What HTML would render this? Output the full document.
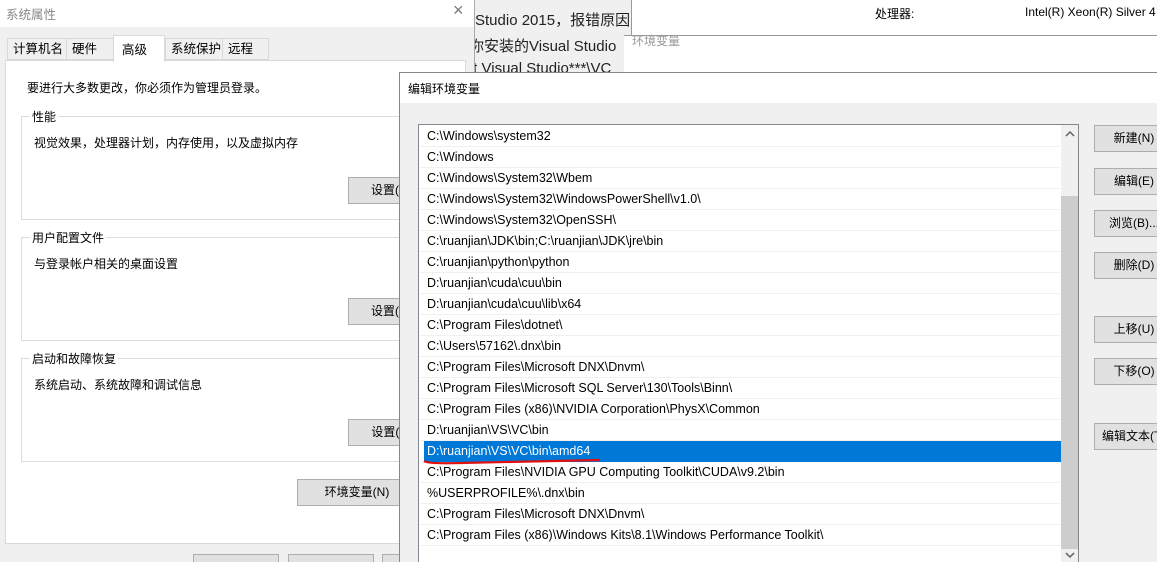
<!DOCTYPE html>
<html style="width:1157px;height:562px;overflow:hidden"><head><meta charset="utf-8"><style>
*{margin:0;padding:0;box-sizing:border-box}
body{width:1157px;height:562px;overflow:hidden;position:relative;background:#f0f0f0;font-family:"Liberation Sans","Microsoft YaHei","Noto Sans CJK SC",sans-serif;font-size:12px;color:#000}
.a{position:absolute;white-space:nowrap}
.btn{position:absolute;background:#e1e1e1;border:1px solid #adadad;text-align:center;font-size:12px;line-height:25px;height:27px}
.grp{position:absolute;border:1px solid #dcdcdc}
.gl{position:absolute;top:-9px;left:8px;background:#fff;padding:0 2px;font-size:12px}
.tab{position:absolute;top:38px;height:22px;border:1px solid #d9d9d9;background:#f0f0f0;line-height:20px;padding-left:5px;font-size:12.5px}
.row{position:absolute;left:1px;width:640px;height:21px;border-bottom:1px solid #f0f0f0;padding-left:7px;line-height:20px;font-size:12.5px}
</style></head><body>
<div class="a" style="left:0;top:0;width:475px;height:27px;background:#fff"></div>
<div class="a" style="left:6px;top:4px;color:#888;font-size:12.5px">系统属性</div>
<div class="a" style="left:453px;top:0;color:#777;font-size:18px">×</div>
<div class="a" style="left:474px;top:0;width:1px;height:562px;background:#aaa"></div>
<div class="tab" style="left:7px;width:60px">计算机名</div>
<div class="tab" style="left:66px;width:48px">硬件</div>
<div class="tab" style="left:165px;width:58px">系统保护</div>
<div class="tab" style="left:222px;width:47px">远程</div>
<div class="a" style="left:5px;top:60px;width:461px;height:484px;background:#fff;border:1px solid #d9d9d9"></div>
<div class="a" style="left:113px;top:35px;width:52px;height:27px;background:#fff;border:1px solid #d9d9d9;border-bottom:none;padding:3px 0 0 8px;font-size:12.5px">高级</div>
<div class="a" style="left:27px;top:79px">要进行大多数更改，你必须作为管理员登录。</div>
<div class="grp" style="left:21px;top:116px;width:420px;height:104px"><span class="gl">性能</span></div>
<div class="a" style="left:34px;top:134px">视觉效果，处理器计划，内存使用，以及虚拟内存</div>
<div class="btn" style="left:348px;top:177px;width:86px">设置(S)</div>
<div class="grp" style="left:21px;top:237px;width:420px;height:104px"><span class="gl">用户配置文件</span></div>
<div class="a" style="left:34px;top:255px">与登录帐户相关的桌面设置</div>
<div class="btn" style="left:348px;top:298px;width:86px">设置(E)</div>
<div class="grp" style="left:21px;top:358px;width:420px;height:104px"><span class="gl">启动和故障恢复</span></div>
<div class="a" style="left:34px;top:376px">系统启动、系统故障和调试信息</div>
<div class="btn" style="left:348px;top:419px;width:86px">设置(T)</div>
<div class="btn" style="left:297px;top:479px;width:120px">环境变量(N)</div>
<div class="btn" style="left:193px;top:554px;width:86px"></div>
<div class="btn" style="left:288px;top:554px;width:86px"></div>
<div class="btn" style="left:382px;top:554px;width:86px"></div>
<div class="a" style="left:475px;top:0;width:157px;height:80px;background:#f0f0f0;overflow:hidden;font-size:15px;color:#222">
<div class="a" style="left:0;top:9px">Studio 2015，报错原因</div>
<div class="a" style="left:-6px;top:35px">你安装的Visual Studio</div>
<div class="a" style="left:-6px;top:60px">ft Visual Studio***\VC</div>
</div>
<div class="a" style="left:631px;top:0;width:1px;height:36px;background:#999"></div>
<div class="a" style="left:632px;top:0;width:525px;height:35px;background:#fff"></div>
<div class="a" style="left:875px;top:5px">处理器:</div>
<div class="a" style="left:1025px;top:5px">Intel(R) Xeon(R) Silver 4</div>
<div class="a" style="left:624px;top:35px;width:533px;height:1px;background:#999"></div>
<div class="a" style="left:624px;top:36px;width:533px;height:42px;background:#fff"></div>
<div class="a" style="left:632px;top:32px;color:#999">环境变量</div>
<div class="a" style="left:399px;top:72px;width:758px;height:490px;background:#f0f0f0;border:1px solid #888;border-right:none;border-bottom:none"></div>
<div class="a" style="left:400px;top:73px;width:757px;height:30px;background:#fff"></div>
<div class="a" style="left:408px;top:80px">编辑环境变量</div>
<div class="a" style="left:418px;top:124px;width:661px;height:440px;background:#fff;border:1px solid #828790;overflow:hidden">
<div class="row" style="top:1px">C:\Windows\system32</div>
<div class="row" style="top:22px">C:\Windows</div>
<div class="row" style="top:43px">C:\Windows\System32\Wbem</div>
<div class="row" style="top:64px">C:\Windows\System32\WindowsPowerShell\v1.0\</div>
<div class="row" style="top:85px">C:\Windows\System32\OpenSSH\</div>
<div class="row" style="top:106px">C:\ruanjian\JDK\bin;C:\ruanjian\JDK\jre\bin</div>
<div class="row" style="top:127px">C:\ruanjian\python\python</div>
<div class="row" style="top:148px">D:\ruanjian\cuda\cuu\bin</div>
<div class="row" style="top:169px">D:\ruanjian\cuda\cuu\lib\x64</div>
<div class="row" style="top:190px">C:\Program Files\dotnet\</div>
<div class="row" style="top:211px">C:\Users\57162\.dnx\bin</div>
<div class="row" style="top:232px">C:\Program Files\Microsoft DNX\Dnvm\</div>
<div class="row" style="top:253px">C:\Program Files\Microsoft SQL Server\130\Tools\Binn\</div>
<div class="row" style="top:274px">C:\Program Files (x86)\NVIDIA Corporation\PhysX\Common</div>
<div class="row" style="top:295px">D:\ruanjian\VS\VC\bin</div>
<div class="row" style="top:316px;left:5px;width:637px;padding-left:3px;background:#0078d7;color:#fff;border-bottom:none">D:\ruanjian\VS\VC\bin\amd64</div>
<div class="row" style="top:337px">C:\Program Files\NVIDIA GPU Computing Toolkit\CUDA\v9.2\bin</div>
<div class="row" style="top:358px">%USERPROFILE%\.dnx\bin</div>
<div class="row" style="top:379px">C:\Program Files\Microsoft DNX\Dnvm\</div>
<div class="row" style="top:400px">C:\Program Files (x86)\Windows Kits\8.1\Windows Performance Toolkit\</div>
<div class="a" style="left:642px;top:0;width:17px;height:440px;background:#f0f0f0"></div>
<div class="a" style="left:642px;top:71px;width:17px;height:353px;background:#cdcdcd"></div>
<svg class="a" style="left:646px;top:5px" width="10" height="8"><path d="M1 6 L5 2 L9 6" stroke="#606060" stroke-width="1.5" fill="none"/></svg>
<svg class="a" style="left:646px;top:426px" width="10" height="8"><path d="M1 2 L5 6 L9 2" stroke="#606060" stroke-width="1.5" fill="none"/></svg>
</div>
<svg class="a" style="left:420px;top:455px" width="190" height="12"><path d="M4 6 Q8 9 40 8 L180 5" stroke="#e01010" stroke-width="2.2" fill="none"/></svg>
<div class="btn" style="left:1094px;top:125px;width:80px">新建(N)</div>
<div class="btn" style="left:1094px;top:168px;width:80px">编辑(E)</div>
<div class="btn" style="left:1094px;top:210px;width:80px">浏览(B)...</div>
<div class="btn" style="left:1094px;top:252px;width:80px">删除(D)</div>
<div class="btn" style="left:1094px;top:316px;width:80px">上移(U)</div>
<div class="btn" style="left:1094px;top:358px;width:80px">下移(O)</div>
<div class="btn" style="left:1094px;top:423px;width:80px;text-align:left;padding-left:7px">编辑文本(T)</div>
</body></html>
